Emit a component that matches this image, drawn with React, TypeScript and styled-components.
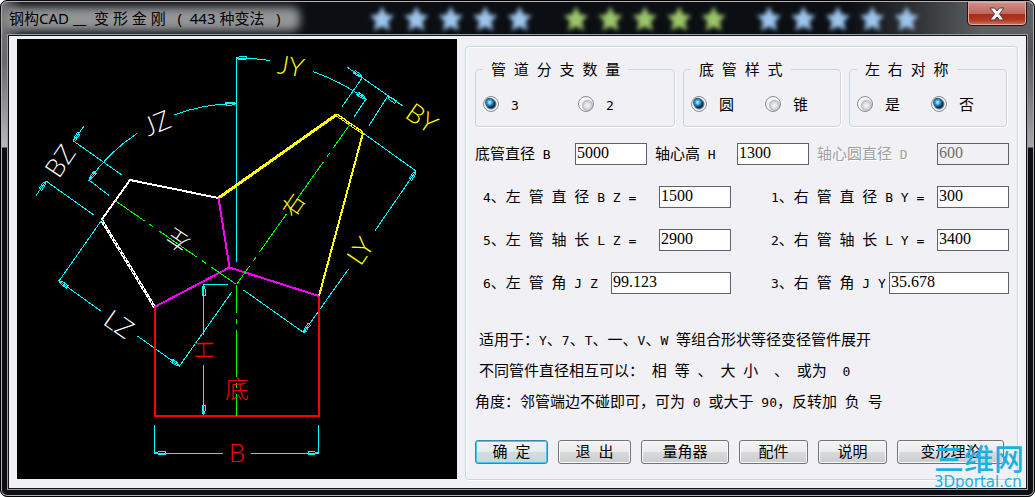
import React from "react";
import styled, { createGlobalStyle, css } from "styled-components";

const CJK = `"Noto Sans CJK SC", sans-serif`;
const EDGE = "#c6d8de";

const GlobalStyle = createGlobalStyle`
  *, *::before, *::after { box-sizing: border-box; }
  body { margin: 0; background: #fff; }
  button, input { font: inherit; color: inherit; margin: 0; }
`;

const Window = styled.main`
  min-height: 100vh;
  display: flex;
  flex-direction: column;
  padding: 0 6px 6px;
  border: 1px solid #000;
  border-radius: 7px;
  box-shadow: inset 0 0 0 1px #b4adb4;
  background:
    linear-gradient(to bottom, #77797a 0, #66696a 60px, #b8b8ba 146px, transparent 147px) left top / 8px 100% no-repeat,
    linear-gradient(to bottom, #5c6062 0, #54585a 50px, #a4a6a8 146px, transparent 147px) right top / 8px 100% no-repeat,
    #0b0f14;
  font: 15px/18px ${CJK};
  color: #000;
`;

const TitleBar = styled.header`
  position: relative;
  height: 33px;
  margin: 0 -5px;
  padding: 0 6px 0 2px;
  display: flex;
  align-items: flex-start;
  border-radius: 6px 6px 0 0;
  border-top: 1px solid #b4adb4;
  background: linear-gradient(to right, #77797a 0, #0b0f14 20px, #0b0f14 82%, #2a2d31 88%, #5c6062 95%, #5c6062 100%);
`;

const Title = styled.h1`
  position: relative;
  flex: none;
  width: 362px;
  margin: 0;
  padding: 5px 0 0 5px;
  font: 400 15px/22px "Noto Sans", ${CJK};
  white-space: pre;

  &::before {
    content: "";
    position: absolute;
    left: 0;
    top: 5px;
    width: 296px;
    height: 24px;
    border-radius: 8px;
    background: #929496;
    filter: blur(4px);
  }

  span { position: relative; }
`;

const CloseButton = styled.button`
  width: 60px;
  height: 24px;
  margin-left: auto;
  padding: 0;
  display: flex;
  align-items: center;
  justify-content: center;
  border: 1px solid #2c1010;
  border-top: 0;
  border-radius: 0 0 5px 5px;
  box-shadow: inset 0 0 0 1px #e0aaa4;
  background: linear-gradient(to bottom, #cf8f88 0, #c0665c 12px, #ab2a17 12px, #b03a22 18px, #cf7660 100%);
`;

const Client = styled.div`
  position: relative;
  flex: 1;
  display: flex;
  align-items: flex-start;
  gap: 8px;
  padding: 3px 8px 8px;
  border: 1px solid #10141a;
  outline: 1px solid #9b9ba2;
  margin: 1px 1px;
  background: #f1f1f5;
`;

const Drawing = styled.svg`
  flex: none;
  width: 440px;
  height: 440px;
  background: #000;
  font-family: Lato, sans-serif;
`;

const Panel = styled.form`
  flex: 1;
  min-width: 0;
  margin-top: 7px;
  padding: 13px 8px 15px 9px;
  border: 1px solid ${EDGE};
  border-radius: 4px;
  box-shadow: inset 1px 1px 0 #fff, 1px 1px 0 #fff;
`;

const Groups = styled.div`
  display: grid;
  grid-template-columns: 200fr 158fr 158fr;
  gap: 8px;
  padding-right: 2px;
`;

const Group = styled.fieldset`
  min-width: 0;
  height: 67px;
  margin: 0;
  padding: 17px 7px 0;
  border: 1px solid ${EDGE};
  border-radius: 4px;
  box-shadow: 1px 1px 0 #fff;
`;

const Legend = styled.legend`
  padding: 0 8px;
  white-space: pre;
`;

const Options = styled.div<{ $step: number }>`
  display: grid;
  grid-template-columns: ${(p) => p.$step}px auto;
`;

const Option = styled.label`
  display: flex;
  align-items: center;
  gap: 12px;
`;

const Radio = styled.input`
  appearance: none;
  width: 16px;
  height: 16px;
  border: 1px solid #8b8d90;
  border-radius: 50%;
  background: radial-gradient(circle at 60% 60%, #f4f5f6 0, #dcdee0 3px, #b9bcc0 5px, #f6f6f6 6px);

  &:checked {
    background: radial-gradient(circle at 40% 38%, #d8f6ff 0, #49b4dc 2px, #12608e 4px, transparent 5px),
      radial-gradient(circle, #0d2c48 0, #0d2c48 4px, #f6f6f6 6px);
  }
`;

const BaseRow = styled.div`
  display: grid;
  grid-template-columns: 100fr 72px 90fr 72px 128fr 72px;
  align-items: center;
  margin-top: 16px;
`;

const Label = styled.label<{ $inset?: boolean; $muted?: boolean }>`
  white-space: pre;
  padding-bottom: 2px;
  padding-left: ${(p) => (p.$inset ? 8 : 0)}px;
  ${(p) =>
    p.$muted &&
    css`
      color: #a0a0a0;
      text-shadow: 1px 1px 0 #fff;
    `}
`;

const TextBox = styled.input<{ $wide?: boolean }>`
  flex: none;
  width: ${(p) => (p.$wide ? 120 : 72)}px;
  height: 22px;
  padding: 0 1px 2px;
  border: 1px solid #5f6266;
  border-radius: 0;
  background: #fdfefd;
  font: 16px/18px "Liberation Serif", serif;

  &:disabled {
    background: transparent;
    color: #6d6d6d;
  }
`;

const Pairs = styled.div`
  display: grid;
  grid-template-columns: 256fr 238fr;
  gap: 21px 40px;
  margin-top: 21px;
`;

const Field = styled.div<{ $inset?: boolean }>`
  display: flex;
  align-items: center;
  justify-content: space-between;
  padding-left: ${(p) => (p.$inset ? 8 : 0)}px;
`;

const Notes = styled.div`
  margin-top: 36px;
`;

const Note = styled.p<{ $inset?: boolean }>`
  margin: 0 0 13px;
  padding-left: ${(p) => (p.$inset ? 4 : 0)}px;
  white-space: pre;
`;

const Buttons = styled.div`
  display: grid;
  grid-template-columns: 73fr 73fr 88fr 69fr 69fr 107fr;
  gap: 10px;
  margin-top: 30px;
  padding-right: 5px;
`;

const PushButton = styled.button<{ $primary?: boolean }>`
  height: 24px;
  padding: 0 0 2px;
  line-height: 18px;
  white-space: pre;
  border-radius: 3px;
  border: 1px solid ${(p) => (p.$primary ? "#3a86b0" : "#707275")};
  box-shadow: inset 0 0 0 1px ${(p) => (p.$primary ? "#42c8f0" : "#fafafa")};
  background: ${(p) =>
    p.$primary
      ? "linear-gradient(to bottom, #f0f3f5 0, #e6ecef 11px, #d2dde2 11px, #c6d6dc 100%)"
      : "linear-gradient(to bottom, #f3f3f3 0, #ebebec 11px, #d9dadc 11px, #cbcccf 100%)"};
`;

const LatinRun = styled.span`
  font-family: "DejaVu Sans Mono", monospace;
  font-size: 13px;
  line-height: 0;
`;

const Watermark = styled.div`
  position: absolute;
  right: 0;
  bottom: 0;
  width: 92px;
  color: #1fb0e2;
  pointer-events: none;
`;

const WatermarkName = styled.div`
  margin-bottom: 6px;
  font: 500 30px/26px ${CJK};
`;

const WatermarkSite = styled.div`
  font: 15px/12px "DejaVu Sans", sans-serif;
`;

/* Half-width characters use a fixed-pitch face, about half a CJK square wide. */
function Mixed({ text }: { text: string }) {
  return (
    <>
      {text.split(/([\x20-\x7e]+)/).map((run, i) =>
        i % 2 ? <LatinRun key={i}>{run}</LatinRun> : run
      )}
    </>
  );
}

const STAR = "M0 -12 L4 -4 L12 -3 L6 3 L8 12 L0 8 L-8 12 L-6 3 L-12 -3 L-4 -4 Z";
const STAR_SETS = [
  { x: 16, fill: "#9cc4ec" },
  { x: 210, fill: "#9cc468" },
  { x: 403, fill: "#9cc4ec" },
];

function Stars() {
  return (
    <svg width="560" height="32" viewBox="0 0 560 32" aria-hidden="true">
      <defs>
        <filter id="soft" x="-30%" y="-30%" width="160%" height="160%">
          <feGaussianBlur stdDeviation="2" />
        </filter>
      </defs>
      {STAR_SETS.map((set) =>
        [0, 1, 2, 3, 4].map((n) => (
          <path
            key={`${set.x}-${n}`}
            d={STAR}
            fill={set.fill}
            filter="url(#soft)"
            transform={`translate(${set.x + n * 34.4} 16.5)`}
          />
        ))
      )}
    </svg>
  );
}

function Arrow({ x, y, r }: { x: number; y: number; r: number }) {
  return <path d="M0 0 L4 -1.5 L10 -1.5 L10 1.5 L4 1.5 Z" transform={`translate(${x} ${y}) rotate(${r})`} />;
}

function Mark({ x, y, r = 0, fill, size = 26, children }: {
  x: number; y: number; r?: number; fill: string; size?: number; children: string;
}) {
  const cjk = size < 26;
  return (
    <text
      transform={`translate(${x} ${y}) rotate(${r})`}
      y={size * 0.36}
      textAnchor="middle"
      fill={fill}
      fontSize={size}
      fontWeight={300}
      fontFamily={cjk ? "'Noto Sans CJK SC', sans-serif" : undefined}
    >
      {children}
    </text>
  );
}

function PipeDrawing() {
  return (
    <Drawing viewBox="17 39 440 440" role="img" aria-label="管件尺寸图">
      <g fill="none" stroke="#0ff" shapeRendering="crispEdges">
        <path d="M236.5 262V58 M236 58A227 227 0 0 1 270 60.5 M313 71.5A227 227 0 0 1 366 99L354 117" />
        <path d="M236 103.5A181 181 0 0 0 174 115 M137 133.5A181 181 0 0 0 89 180L109 195.5" />
        <path d="M84 126L73.500 141L122.500 175.500 M35.500 196.500L46 181L94.500 215.500" />
        <path d="M101 221L59 281L101.500 311.500 M137.500 336L179.500 366L231.500 292.500" />
        <path d="M347 67L403.500 106.500 M362.500 77.500L341.500 107.500 M387.500 96.500L368.500 126.500" />
        <path d="M363 133L416 171L374.500 231.500 M348.500 269L303.500 332.500L243.500 290" />
        <path d="M228 284.500H203.500V335 M203.500 365V415" />
        <path d="M154.500 425V453.500H223 M251 453.500H318.500V425" />
        <Arrow x={236} y={58} r={2} />
        <Arrow x={366} y={99} r={213} />
        <Arrow x={236} y={103.5} r={179} />
        <Arrow x={89} y={180} r={-52} />
        <Arrow x={73.5} y={141} r={-56} />
        <Arrow x={46} y={181} r={124} />
        <Arrow x={59} y={281} r={35} />
        <Arrow x={179.5} y={366} r={215} />
        <Arrow x={362.5} y={77.5} r={215} />
        <Arrow x={387.5} y={96.5} r={35} />
        <Arrow x={416} y={171} r={124} />
        <Arrow x={303.5} y={332.5} r={-56} />
        <Arrow x={203.5} y={285} r={90} />
        <Arrow x={203.5} y={415} r={-90} />
        <Arrow x={155} y={453} r={0} />
        <Arrow x={318} y={453} r={180} />
      </g>
      <g fill="none" shapeRendering="crispEdges">
        <path d="M154.500 307V416H319V296" stroke="#f00" strokeWidth="2" />
        <path d="M218.500 198L130 180L101.500 220L154.500 307" stroke="#fff" strokeWidth="2" />
        <path d="M101.500 220L154.500 307" stroke="#fff" strokeWidth="3" />
        <path d="M101.500 220L154.500 307" stroke="#000" strokeDasharray="2 3" />
        <path d="M218.500 198L336 115" stroke="#ff0" strokeWidth="3" />
        <path d="M336 114.500L363 133" stroke="#ff0" strokeWidth="3" />
        <path d="M337 115.500L362 132.500" stroke="#000" strokeDasharray="2 1" />
        <path d="M363 133L319 296" stroke="#ff0" strokeWidth="2" />
        <path d="M218.500 198L229.500 267.500L319 296 M229.500 267.500L154.500 307" stroke="#f0f" strokeWidth="2" />
        <g stroke="#0f0" strokeDasharray="47 6 5 6">
          <path d="M115 200.500L236.500 284.500" strokeDashoffset="11" />
          <path d="M349.500 125L236.500 284.500" strokeDashoffset="19" />
          <path d="M236.500 284.500V416" strokeDashoffset="19" />
        </g>
      </g>
      <Mark x={291} y={66} r={10} fill="#ff0">JY</Mark>
      <Mark x={157} y={123} r={-22} fill="#fff">JZ</Mark>
      <Mark x={60} y={161} r={-56} fill="#fff">BZ</Mark>
      <Mark x={119} y={324} r={35} fill="#fff">LZ</Mark>
      <Mark x={422} y={118} r={35} fill="#ff0">BY</Mark>
      <Mark x={360} y={251} r={-56} fill="#ff0">LY</Mark>
      <Mark x={204} y={350} r={-90} fill="#f00">H</Mark>
      <Mark x={237} y={453} fill="#f00">B</Mark>
      <Mark x={178} y={240} r={214} fill="#fff" size={22}>左</Mark>
      <Mark x={293} y={205} r={-56} fill="#ff0" size={22}>右</Mark>
      <Mark x={237} y={389} fill="#f00" size={24}>底</Mark>
    </Drawing>
  );
}

const CHOICES = [
  { name: "branches", legend: "管 道 分 支 数 量", step: 95, options: ["3", "2"], value: "3" },
  { name: "base", legend: "底 管 样 式", step: 74, options: ["圆", "锥"], value: "圆" },
  { name: "symmetry", legend: "左 右 对 称", step: 74, options: ["是", "否"], value: "否" },
];

const PAIRS = [
  { id: "bz", label: "4、左 管 直 径 B Z =", value: "1500" },
  { id: "by", label: "1、右 管 直 径 B Y =", value: "300" },
  { id: "lz", label: "5、左 管 轴 长 L Z =", value: "2900" },
  { id: "ly", label: "2、右 管 轴 长 L Y =", value: "3400" },
  { id: "jz", label: "6、左 管 角 J Z", value: "99.123", wide: true },
  { id: "jy", label: "3、右 管 角 J Y", value: "35.678", wide: true },
];

const ACTIONS = ["确 定", "退 出", "量角器", "配件", "说明", "变形理论"];

export default function App() {
  return (
    <>
      <GlobalStyle />
      <Window>
        <TitleBar>
          <Title><span>钢构CAD __  变 形 金 刚   (  443 种变法   )</span></Title>
          <Stars />
          <CloseButton type="button" aria-label="关闭">
            <svg width="18" height="16" viewBox="0 0 18 16" aria-hidden="true">
              <path
                d="M2 2H6.500L9 5L11.500 2H16L11.500 8L16 14H11.500L9 11L6.500 14H2L6.500 8Z"
                fill="#f4f4f4"
                stroke="#5b3a3c"
              />
            </svg>
          </CloseButton>
        </TitleBar>
        <Client>
          <PipeDrawing />
          <Panel onSubmit={(e) => e.preventDefault()}>
            <Groups>
              {CHOICES.map((c) => (
                <Group key={c.name}>
                  <Legend><Mixed text={c.legend} /></Legend>
                  <Options $step={c.step}>
                    {c.options.map((o) => (
                      <Option key={o}>
                        <Radio type="radio" name={c.name} value={o} defaultChecked={o === c.value} />
                        <span><Mixed text={o} /></span>
                      </Option>
                    ))}
                  </Options>
                </Group>
              ))}
            </Groups>
            <BaseRow>
              <Label htmlFor="b"><Mixed text="底管直径 B" /></Label>
              <TextBox id="b" defaultValue="5000" />
              <Label htmlFor="h" $inset><Mixed text="轴心高 H" /></Label>
              <TextBox id="h" defaultValue="1300" />
              <Label htmlFor="d" $inset $muted><Mixed text="轴心圆直径 D" /></Label>
              <TextBox id="d" defaultValue="600" disabled />
            </BaseRow>
            <Pairs>
              {PAIRS.map((f, i) => (
                <Field key={f.id} $inset={i % 2 === 0}>
                  <Label htmlFor={f.id}><Mixed text={f.label} /></Label>
                  <TextBox id={f.id} defaultValue={f.value} $wide={f.wide} />
                </Field>
              ))}
            </Pairs>
            <Notes>
              <Note $inset><Mixed text="适用于：Y、7、T、一、V、W 等组合形状等径变径管件展开" /></Note>
              <Note $inset><Mixed text="不同管件直径相互可以： 相 等 、 大 小  、 或为  0" /></Note>
              <Note><Mixed text="角度：邻管端边不碰即可，可为 0 或大于 90，反转加 负 号" /></Note>
            </Notes>
            <Buttons>
              {ACTIONS.map((a, i) => (
                <PushButton key={a} type={i ? "button" : "submit"} $primary={i === 0}>
                  <Mixed text={a} />
                </PushButton>
              ))}
            </Buttons>
          </Panel>
          <Watermark>
            <WatermarkName>三维网</WatermarkName>
            <WatermarkSite>3Dportal.cn</WatermarkSite>
          </Watermark>
        </Client>
      </Window>
    </>
  );
}
